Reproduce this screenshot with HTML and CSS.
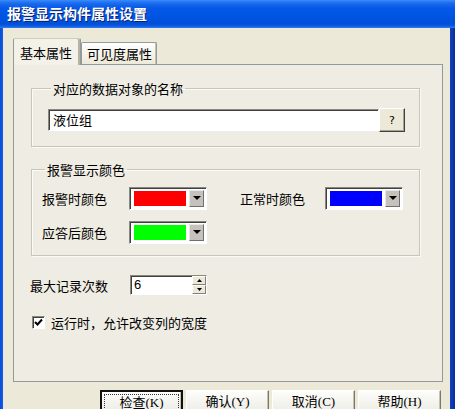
FILE: index.html
```html
<!DOCTYPE html>
<html lang="zh-CN">
<head>
    <meta charset="UTF-8">
    <title>报警显示构件属性设置</title>
    <link rel="stylesheet" href="styles.css">
</head>
<body>
    <div class="window">
        <div class="titlebar">报警显示构件属性设置</div>
        <div class="client">
            <div class="tabs">
                <div class="tab active">基本属性</div>
                <div class="tab">可见度属性</div>
            </div>
            <div class="panel">
                <fieldset class="group group-name">
                    <legend>对应的数据对象的名称</legend>
                    <div class="name-row">
                        <div class="textbox">液位组</div>
                        <button class="small-btn">?</button>
                    </div>
                </fieldset>

                <fieldset class="group group-color">
                    <legend>报警显示颜色</legend>
                    <div class="color-row">
                        <span class="label">报警时颜色</span>
                        <div class="combo"><span class="swatch red"></span><span class="drop"></span></div>
                        <span class="label label-right">正常时颜色</span>
                        <div class="combo"><span class="swatch blue"></span><span class="drop"></span></div>
                    </div>
                    <div class="color-row">
                        <span class="label">应答后颜色</span>
                        <div class="combo"><span class="swatch green"></span><span class="drop"></span></div>
                    </div>
                </fieldset>

                <div class="spin-row">
                    <span class="spin-label">最大记录次数</span>
                    <div class="spin">
                        <span class="spin-value">6</span>
                        <span class="spin-btns">
                            <span class="spin-btn">
                                <svg width="5" height="3" viewBox="0 0 5 3"><path d="M2.5 0 L5 3 L0 3 Z" fill="#000"/></svg>
                            </span>
                            <span class="spin-btn">
                                <svg width="5" height="3" viewBox="0 0 5 3"><path d="M0 0 L5 0 L2.5 3 Z" fill="#000"/></svg>
                            </span>
                        </span>
                    </div>
                </div>

                <label class="check-row">
                    <span class="checkbox">
                        <svg width="9" height="9" viewBox="0 0 9 9"><path d="M1 4 L3.5 6.5 L8 1.5" fill="none" stroke="#000" stroke-width="2"/></svg>
                    </span>
                    运行时，允许改变列的宽度
                </label>
            </div>

            <div class="buttons">
                <button class="btn focused"><span class="focus-ring">检查(K)</span></button>
                <button class="btn">确认(Y)</button>
                <button class="btn">取消(C)</button>
                <button class="btn">帮助(H)</button>
            </div>
        </div>
    </div>
</body>
</html>
```

FILE: styles.css
```css
body {
    margin: 0;
    overflow: hidden;
    font-family: "Noto Sans CJK SC", "DejaVu Sans", sans-serif;
    font-size: 13px;
    color: #000;
    background: #0a3fc8;
}
.window {
    width: 455px;
    height: 409px;
    display: flex;
    flex-direction: column;
    background: linear-gradient(90deg, #0a4bd6 0, #1660e8 3px, #ece9d8 3px, #ece9d8 450px, #1242c0 450px, #0a2e9a 455px);
}
.titlebar {
    height: 28px;
    flex: none;
    padding-left: 7px;
    line-height: 27px;
    color: #fff;
    font-weight: bold;
    font-size: 14px;
    text-shadow: 1px 1px 0 #0a1f73;
    background: linear-gradient(#3b8cf8 0, #1c6df0 3px, #0758e6 8px, #0055e3 16px, #004fd8 24px, #1a66e8 27px, #3a86f2 28px);
}
.client {
    flex: 1;
    margin: 0 5px 0 3px;
    padding: 10px 7px 0 10px;
    background: #ece9d8;
}

/* tabs */
.tabs {
    display: flex;
    align-items: flex-end;
    height: 26px;
}
.tab {
    height: 21px;
    padding: 0 4px 0 5px;
    line-height: 22px;
    white-space: nowrap;
    border: 1px solid #919b9c;
    border-bottom: none;
    border-radius: 2px 2px 0 0;
    background: linear-gradient(#fefefe, #ece9d8);
    box-shadow: inset -1px 0 0 #c5c2b2;
}
.tab.active {
    position: relative;
    z-index: 1;
    height: 26px;
    line-height: 27px;
    padding: 0 8px 0 6px;
    margin-bottom: -1px;
    background: #f3f1e8;
    border-top: 1px solid #cfccc0;
    box-shadow: inset -2px 0 0 #b6b3a4;
}

.panel {
    border: 1px solid #919b9c;
    background: #efede3;
    padding: 16px 22px 0 17px;
    box-sizing: border-box;
    width: 430px;
    height: 318px;
}

/* group boxes */
.group {
    margin: 0;
    min-width: 0;
    border: 1px solid #c9c6b8;
    box-shadow: inset 1px 1px 0 #fbfaf6, 1px 1px 0 #fbfaf6;
    padding: 12px 14px 14px 16px;
}
.group legend {
    padding: 0 2px;
    margin-left: 3px;
    line-height: 15px;
}
.name-row {
    display: flex;
    align-items: center;
}
.textbox {
    width: 325px;
    height: 20px;
    line-height: 20px;
    padding-left: 4px;
    background: #fff;
    border-top: 1px solid #8a887c;
    border-left: 1px solid #8a887c;
    border-right: 1px solid #fff;
    border-bottom: 1px solid #fff;
    box-shadow: inset 1px 1px 0 #404040;
}
.small-btn {
    width: 26px;
    height: 24px;
    padding: 0;
    font-family: "DejaVu Sans", sans-serif;
    font-size: 11px;
    background: #ece9d8;
    border: 1px solid;
    border-color: #fff #404040 #404040 #fff;
    box-shadow: inset -1px -1px 0 #a6a393;
}

.group-color {
    margin-top: 15px;
    padding: 10px 14px 11px 10px;
}
.color-row {
    display: flex;
    align-items: center;
    height: 23px;
}
.color-row + .color-row {
    margin-top: 11px;
}
.label {
    width: 87px;
    flex: none;
}
.label-right {
    margin-left: 33px;
    width: 85px;
}
.combo {
    width: 78px;
    height: 23px;
    box-sizing: border-box;
    display: flex;
    align-items: center;
    padding: 3px 2px 3px 4px;
    background: #fff;
    border: 1px solid;
    border-color: #8a887c #fff #fff #8a887c;
    box-shadow: inset 1px 1px 0 #404040;
}
.swatch {
    flex: 1;
    height: 15px;
    margin-right: 3px;
}
.swatch.red { background: #ff0000; }
.swatch.blue { background: #0000ff; }
.swatch.green { background: #00ff00; }
.drop {
    width: 15px;
    height: 17px;
    flex: none;
    background: #c4c2bb;
    border: 1px solid;
    border-color: #e8e8e8 #6f6f6f #6f6f6f #e8e8e8;
    box-sizing: border-box;
    position: relative;
}
.drop::after {
    content: "";
    position: absolute;
    left: 3px;
    top: 5px;
    border-left: 4px solid transparent;
    border-right: 4px solid transparent;
    border-top: 4px solid #000;
}

/* spin */
.spin-row {
    display: flex;
    align-items: center;
    margin-top: 19px;
    margin-left: -1px;
}
.spin-label {
    width: 100px;
}
.spin {
    width: 77px;
    height: 20px;
    box-sizing: border-box;
    display: flex;
    background: #fff;
    border: 1px solid;
    border-color: #8a887c #fff #fff #8a887c;
    box-shadow: inset 1px 1px 0 #404040;
}
.spin-value {
    flex: 1;
    padding-left: 3px;
    line-height: 18px;
    font-family: "Liberation Sans", sans-serif;
}
.spin-btns {
    width: 14px;
    display: flex;
    flex-direction: column;
}
.spin-btn {
    flex: 1;
    display: flex;
    align-items: center;
    justify-content: center;
    background: #ece9d8;
    border: 1px solid;
    border-color: #fff #808080 #808080 #fff;
}

/* checkbox */
.check-row {
    display: flex;
    align-items: center;
    margin-top: 18px;
    margin-left: 1px;
}
.checkbox {
    width: 11px;
    height: 11px;
    margin-right: 6px;
    display: flex;
    align-items: center;
    justify-content: center;
    background: #fff;
    border: 1px solid;
    border-color: #8a887c #fff #fff #8a887c;
    box-shadow: inset 1px 1px 0 #404040;
}

/* bottom buttons */
.buttons {
    display: flex;
    justify-content: flex-end;
    gap: 3px;
    margin-top: 8px;
    padding-right: 2px;
}
.btn {
    width: 83px;
    height: 24px;
    padding: 0;
    font-family: "Liberation Serif", "Noto Sans CJK SC", serif;
    font-size: 13px;
    line-height: 18px;
    background: linear-gradient(#fdfdfb, #ecebe4);
    border: 1px solid;
    border-color: #fff #7a7868 #7a7868 #fff;
    box-shadow: inset -1px -1px 0 #c5c2b2;
}
.btn.focused {
    border: 2px solid #111;
    padding: 2px;
}
.focus-ring {
    display: block;
    height: 100%;
    box-sizing: border-box;
    border: 1px dotted #333;
    line-height: 16px;
}
```
